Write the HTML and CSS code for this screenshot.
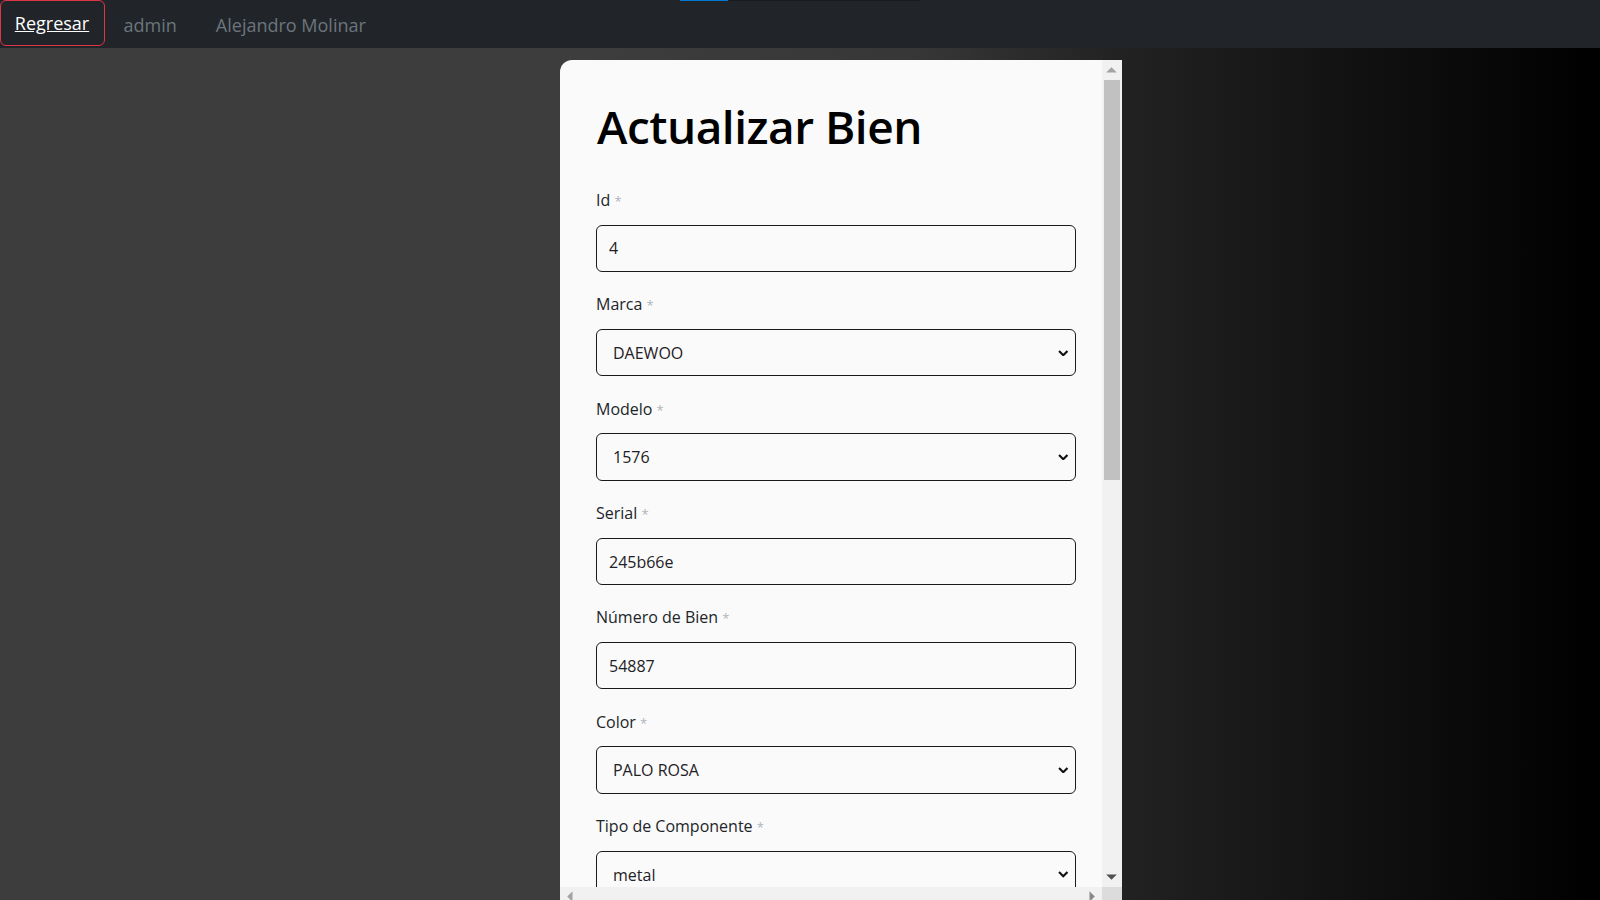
FILE: index.html
```html
<!DOCTYPE html>
<html lang="es">
<head>
<meta charset="utf-8">
<title>Actualizar Bien</title>
<link rel="stylesheet" href="styles.css">
</head>
<body>
<header class="navbar">
  <div class="loadbar"><span class="loadbar-fill"></span></div>
  <a class="btn-back" href="#">Regresar</a>
  <span class="nav-text nav-user">admin</span>
  <span class="nav-text nav-name">Alejandro Molinar</span>
</header>
<main class="stage">
  <section class="frame">
    <div class="frame-view">
      <h1 class="title">Actualizar Bien</h1>
      <form class="form">
        <div class="field">
          <label class="label">Id <span class="req">*</span></label>
          <input class="control" type="text" value="4">
        </div>
        <div class="field">
          <label class="label">Marca <span class="req">*</span></label>
          <div class="select-wrap">
            <select class="control"><option>DAEWOO</option></select>
            <svg class="chev" viewBox="0 0 10 6"><polyline points="1,1 5,5 9,1" fill="none" stroke="#111" stroke-width="2"/></svg>
          </div>
        </div>
        <div class="field">
          <label class="label">Modelo <span class="req">*</span></label>
          <div class="select-wrap">
            <select class="control"><option>1576</option></select>
            <svg class="chev" viewBox="0 0 10 6"><polyline points="1,1 5,5 9,1" fill="none" stroke="#111" stroke-width="2"/></svg>
          </div>
        </div>
        <div class="field">
          <label class="label">Serial <span class="req">*</span></label>
          <input class="control" type="text" value="245b66e">
        </div>
        <div class="field">
          <label class="label">Número de Bien <span class="req">*</span></label>
          <input class="control" type="text" value="54887">
        </div>
        <div class="field">
          <label class="label">Color <span class="req">*</span></label>
          <div class="select-wrap">
            <select class="control"><option>PALO ROSA</option></select>
            <svg class="chev" viewBox="0 0 10 6"><polyline points="1,1 5,5 9,1" fill="none" stroke="#111" stroke-width="2"/></svg>
          </div>
        </div>
        <div class="field">
          <label class="label">Tipo de Componente <span class="req">*</span></label>
          <div class="select-wrap">
            <select class="control"><option>metal</option></select>
            <svg class="chev" viewBox="0 0 10 6"><polyline points="1,1 5,5 9,1" fill="none" stroke="#111" stroke-width="2"/></svg>
          </div>
        </div>
      </form>
    </div>
    <div class="vscroll">
      <div class="sb-btn"><svg width="11" height="6" viewBox="0 0 11 6"><path d="M5.5 0.2 L10.8 5.5 H0.2 Z" fill="#a3a3a3"/></svg></div>
      <div class="vtrack"><div class="vthumb"></div></div>
      <div class="sb-btn"><svg width="11" height="6" viewBox="0 0 11 6"><path d="M5.5 5.8 L10.8 0.5 H0.2 Z" fill="#505050"/></svg></div>
    </div>
    <div class="hscroll">
      <div class="sb-btn"><svg width="6" height="11" viewBox="0 0 6 11"><path d="M0.2 5.5 L5.5 0.2 V10.8 Z" fill="#a3a3a3"/></svg></div>
      <div class="sb-btn"><svg width="6" height="11" viewBox="0 0 6 11"><path d="M5.8 5.5 L0.5 0.2 V10.8 Z" fill="#8a8a8a"/></svg></div>
    </div>
    <div class="sb-corner"></div>
  </section>
</main>
</body>
</html>
```

FILE: styles.css
```css
html, body {
  margin: 0;
  height: 100%;
  overflow: hidden;
}

body {
  font-family: "Open Sans", "Noto Sans", sans-serif;
  background: linear-gradient(90deg, #3d3d3d 0%, #3d3d3d 36%, #373737 57%, #222222 70%, #000000 100%);
}

/* ---------- navbar ---------- */
.navbar {
  position: relative;
  height: 48px;
  background: #212529;
  display: flex;
  align-items: flex-start;
}

.loadbar {
  position: absolute;
  left: 680px;
  top: 0;
  width: 240px;
  height: 1px;
  background: #1a1b1e;
}

.loadbar-fill {
  display: block;
  width: 48px;
  height: 1px;
  background: #0078d4;
}

.btn-back {
  box-sizing: border-box;
  height: 46px;
  border: 1px solid #dc3545;
  border-radius: 6px;
  padding: 9.6px 14.6px 0 13.8px;
  font-size: 18px;
  line-height: 24px;
  color: #ffffff;
  text-decoration: underline;
}

.nav-text {
  font-size: 18px;
  line-height: 24px;
  color: #6c757d;
  padding-top: 13.3px;
}

.nav-user {
  margin-left: 18.8px;
}

.nav-name {
  margin-left: 39px;
}

/* ---------- frame ---------- */
.stage {
  padding: 12.2px 0 0 560.2px;
}

.frame {
  width: 561.8px;
  height: 846.8px;
  background: #fafafa;
  border-radius: 12px 0 0 0;
  display: grid;
  grid-template-columns: 1fr 20px;
  grid-template-rows: 1fr 20px;
  overflow: hidden;
}

.frame-view {
  min-height: 0;
  overflow: hidden;
  padding: 37.6px 0 0 35.8px;
}

.title {
  margin: 0 0 33.6px 1px;
  font-size: 46px;
  font-weight: 600;
  letter-spacing: -0.5px;
  line-height: 56.4px;
  color: #000000;
}

.form {
  margin: 0;
}

.field {
  width: 479.7px;
  margin-bottom: 20.2px;
}

.label {
  display: block;
  font-size: 16px;
  line-height: 24px;
  height: 24px;
  margin-bottom: 12.8px;
  color: #212529;
}

.req {
  color: #adb5bd;
  font-size: 13px;
  line-height: 13px;
}

.control {
  box-sizing: border-box;
  display: block;
  width: 100%;
  height: 47.4px;
  margin: 0;
  border: 1.3px solid #1a1a1a;
  border-radius: 6px;
  background: transparent;
  font-family: "Open Sans", "Noto Sans", sans-serif;
  font-size: 16px;
  line-height: 24px;
  color: #1e2125;
  padding: 10.6px 12px 10.2px 12px;
  outline: none;
}

.select-wrap {
  position: relative;
}

select.control {
  appearance: none;
  -webkit-appearance: none;
  padding-left: 16px;
  padding-right: 30px;
}

.chev {
  position: absolute;
  right: 7.2px;
  top: 20.6px;
  width: 10.5px;
  height: 6.3px;
}

/* ---------- scrollbars ---------- */
.vscroll {
  background: #f1f1f1;
  display: flex;
  flex-direction: column;
  min-height: 0;
}

.sb-btn {
  flex: none;
  width: 20px;
  height: 20px;
  display: flex;
  align-items: center;
  justify-content: center;
}

.vtrack {
  flex: 1;
  padding: 0 2px;
}

.vthumb {
  height: 399.6px;
  background: #c1c1c1;
}

.hscroll {
  background: #f1f1f1;
  display: flex;
  justify-content: space-between;
}

.sb-corner {
  background: #dcdcdc;
}
```
